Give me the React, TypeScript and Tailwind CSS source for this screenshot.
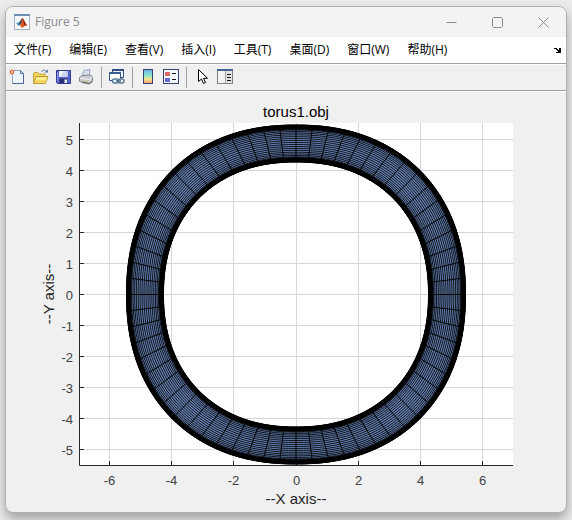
import type { ReactNode } from "react";

const MENU = [
  "文件(F)",
  "编辑(E)",
  "查看(V)",
  "插入(I)",
  "工具(T)",
  "桌面(D)",
  "窗口(W)",
  "帮助(H)",
];

/* ---------- icons ---------- */

function Icon({ children }: { children: ReactNode }) {
  return (
    <svg width="17" height="17" viewBox="0 0 17 17" aria-hidden="true">
      {children}
    </svg>
  );
}

function MatlabIcon() {
  return (
    <svg width="16" height="16" viewBox="0 0 16 16" aria-hidden="true">
      <rect x="0.5" y="0.5" width="15" height="15" fill="#f7f9fb" stroke="#a3afbb" />
      <rect x="0" y="0" width="16" height="2" fill="#6d8fb3" />
      <path d="M2 9.5 5 8l2 2-2 2z" fill="#4d8fb8" />
      <path d="M5 8c1.500-.3 2-3.500 3.500-4L8 9l-2.500 2z" fill="#3d4f70" />
      <path d="M8.300 4c1.300.3 3 5 5.200 8-1.500-1-2.500-.6-3.500.5-1 1.200-1.800 1.300-2.500 1L6 11c1.500-1 2-5 2.300-7z" fill="#d9541e" />
      <path d="M8.800 4.200c1 1 2.600 5 4.400 7.500-1.300-.8-2-.8-2.800 0z" fill="#8c2a17" />
    </svg>
  );
}

function NewIcon() {
  return (
    <Icon>
      <path d="M3.500 2.500h8l3 3v10h-11z" fill="#edf4ff" stroke="#8fa6cb" />
      <path d="M14.500 5.500v10h-11" fill="none" stroke="#4b6798" />
      <path d="M11.500 2.500v3h3z" fill="#c5d7f0" stroke="#6180b2" />
      <path d="M3 1v6M0 4h6M.5 1.500l5 5M5.500 1.500l-5 5" stroke="#eda583" />
      <circle cx="3" cy="4" r="1.500" fill="#fff0d8" stroke="#d9542a" />
    </Icon>
  );
}

function OpenIcon() {
  return (
    <Icon>
      <path d="M9.500 4c1-2.500 4-2.500 5 0" fill="none" stroke="#5874a0" />
      <path d="M12.500 4.500h3.500V1.500z" fill="#5874a0" />
      <path d="M1.500 14.500v-9l1-1h3l1.500 1.500h6v8.500z" fill="#f4d667" stroke="#c5a03a" />
      <path d="M1.500 15.500 4 8.500h12l-2.500 7z" fill="#ffee8e" stroke="#b99a35" />
      <path d="M2.500 14.500h10.500l.8-2H3.300z" fill="#efcb48" />
    </Icon>
  );
}

function SaveIcon() {
  return (
    <Icon>
      <path d="M1.500 2.500h14v13h-13l-1-1z" fill="#5765cb" stroke="#30388f" />
      <path d="M4 3h8.500v6H4z" fill="#f2f5ff" />
      <path d="M9 3h3.500v6H5z" fill="#c9d5f2" />
      <path d="M4.500 10.500h8V15h-8z" fill="#29306f" />
      <path d="M9.500 11.500H12V15H9.500z" fill="#f0f2fa" />
      <path d="M2.500 4v10" stroke="#8c98e8" />
    </Icon>
  );
}

function PrintIcon() {
  return (
    <Icon>
      <path d="M4 9 6 2.500l6-1L11 8z" fill="#f6faff" stroke="#8b9bb5" />
      <path d="M6.500 4.500l4-.7M6 6.500l4-.8" stroke="#b5c2d6" />
      <path d="M1.500 9.500 4 7.500 12.500 7l2 2v4l-3 2.500-10-2z" fill="#c9cbd0" stroke="#85888e" />
      <path d="M2 10l9.500 1.500L14.500 9" fill="none" stroke="#f8f8f8" />
      <path d="M4 13.500 11.500 15l3-2.500v1.500l-3.500 2.500-7-1.500z" fill="#6c6f75" />
      <path d="M5 13l5 1" stroke="#d3bf6b" />
    </Icon>
  );
}

function LinkIcon() {
  return (
    <Icon>
      <path d="M3.500 1.500h11v8h-11z" fill="#f0f4fa" stroke="#35537f" />
      <path d="M3 1h12v2H3z" fill="#2e4c7c" />
      <path d="M.5 4.500h11v8H.5z" fill="#fff" stroke="#35537f" />
      <path d="M0 4h12v2H0z" fill="#3b5d91" />
      <rect x="3.500" y="11" width="6" height="4" rx="2" fill="#edf2f6" stroke="#5d7c96" strokeWidth="1.500" />
      <rect x="9" y="11" width="6" height="4" rx="2" fill="#edf2f6" stroke="#5d7c96" strokeWidth="1.500" />
      <path d="M7 13h5" stroke="#46647e" strokeWidth="1.500" />
    </Icon>
  );
}

function ColorbarIcon() {
  return (
    <Icon>
      <defs>
        <linearGradient id="cbar" x1="0" y1="0" x2="0" y2="1">
          <stop offset="0" stopColor="#6db1e8" />
          <stop offset="0.4" stopColor="#85e2d4" />
          <stop offset="0.7" stopColor="#f6e58a" />
          <stop offset="1" stopColor="#f09a78" />
        </linearGradient>
      </defs>
      <rect x="3.500" y="1.500" width="9" height="14" fill="url(#cbar)" stroke="#34446f" />
    </Icon>
  );
}

function LegendIcon() {
  return (
    <Icon>
      <rect x="0.500" y="1.500" width="15" height="14" fill="#f7f9ff" stroke="#34446f" />
      <path d="M2 4h5v4H2z" fill="#dc6b65" />
      <path d="M2 10h5v4H2z" fill="#6266d8" />
      <path d="M9 5.500h4M9 11.500h4" stroke="#111" />
    </Icon>
  );
}

function PointerIcon() {
  return (
    <Icon>
      <path
        d="M4.500 1.500v12l3-2.500 2 4.500 2-1-2-4.200h4z"
        fill="#fff"
        stroke="#000"
      />
    </Icon>
  );
}

function PanelIcon() {
  return (
    <Icon>
      <rect x="0.500" y="1.500" width="15" height="14" fill="#e4e4e4" stroke="#7b8189" />
      <path d="M0 1h16v2H0z" fill="#426694" />
      <path d="M1 3h8v12H1z" fill="#f3f3f3" />
      <path d="M8.500 3v12" stroke="#a0a0a0" />
      <path d="M10 6.500h4M10 9.500h4M10 12.500h4" stroke="#111" />
    </Icon>
  );
}

function ToolButton({ label, children }: { label: string; children: ReactNode }) {
  return (
    <button
      aria-label={label}
      className="flex h-[25px] w-[23px] items-center justify-center pb-[2px] hover:bg-[#dce9f7]"
    >
      {children}
    </button>
  );
}

function Separator() {
  return <div className="ml-[3px] mr-1 h-[21px] w-px bg-[#a0a0a0]" />;
}

/* ---------- plot ---------- */

const CX = 290;
const CY = 202.5;
const OUTER = { r: 169.5, n: 2.22 };
const INNER = { r: 132.5, n: 2.2 };

// point of the ring at angle t, s = 0 on the inner rim and 1 on the outer rim
function ringPoint(t: number, s: number) {
  const radius = (r: number, n: number) => {
    const c = Math.abs(Math.cos(t));
    const d = Math.abs(Math.sin(t));
    return r / Math.pow(Math.pow(c, n) + Math.pow(d, n), 1 / n);
  };
  const a = radius(INNER.r, INNER.n);
  const b = radius(OUTER.r, OUTER.n);
  const r = a + (b - a) * s;
  return [CX + r * Math.cos(t), CY - r * Math.sin(t)];
}

function ringPath(s: number) {
  const pts: string[] = [];
  for (let i = 0; i < 128; i++) {
    const [x, y] = ringPoint((i / 128) * Math.PI * 2, s);
    pts.push(`${x.toFixed(2)} ${y.toFixed(2)}`);
  }
  return `M${pts.join("L")}Z`;
}

function Torus() {
  const tubes = 29;
  const loops = Array.from({ length: tubes + 1 }, (_, i) =>
    ringPath((1 - Math.cos((i / tubes) * Math.PI)) / 2)
  );
  const spokes = Array.from({ length: 64 }, (_, i) => {
    const t = (i / 64) * Math.PI * 2;
    const [x1, y1] = ringPoint(t + 0.02 * Math.sin(-4 * t), 0);
    const [x2, y2] = ringPoint(t, 1);
    return `M${x1.toFixed(2)} ${y1.toFixed(2)}L${x2.toFixed(2)} ${y2.toFixed(2)}`;
  });

  return (
    <g fill="none" stroke="#000">
      <path d={ringPath(1) + ringPath(0)} fill="#6480b2" fillRule="evenodd" stroke="none" />
      <g strokeOpacity="0.85">
        {loops.map((d, i) => (
          <path key={i} d={d} />
        ))}
      </g>
      <path d={spokes.join("")} />
      <path d={ringPath(0.94)} strokeWidth="5" />
      <path d={ringPath(0.06)} strokeWidth="5" />
    </g>
  );
}

function Plot() {
  const xs = [-6, -4, -2, 0, 2, 4, 6];
  const ys = [5, 4, 3, 2, 1, 0, -1, -2, -3, -4, -5];
  const px = (v: number) => Math.floor(CX + v * 31.080) + 0.5;
  const py = (v: number) => 202.5 - v * 31;

  return (
    <svg
      viewBox="0 0 560 420"
      className="block h-auto w-full font-['Liberation_Sans',Arial,sans-serif]"
      role="img"
      aria-label="torus1.obj"
    >
      <rect x="73" y="31" width="434" height="343" fill="#fff" />
      <g stroke="#d6d6d6">
        {xs.map((v) => (
          <path key={v} d={`M${px(v)} 31V373`} />
        ))}
        {ys.map((v) => (
          <path key={v} d={`M74 ${py(v)}H507`} />
        ))}
      </g>
      <g stroke="#262626" fill="none">
        <path d="M73.500 31V373.500H507" />
        {xs.map((v) => (
          <path key={v} d={`M${px(v)} 373V369`} />
        ))}
        {ys.map((v) => (
          <path key={v} d={`M74 ${py(v)}H78`} />
        ))}
      </g>
      <Torus />
      <g fill="#404040" fontSize="13">
        {xs.map((v) => (
          <text key={v} x={px(v)} y="393" textAnchor="middle">
            {v}
          </text>
        ))}
        {ys.map((v) => (
          <text key={v} x="67" y={py(v) + 5} textAnchor="end">
            {v}
          </text>
        ))}
      </g>
      <g fontSize="15" textAnchor="middle">
        <text x="290" y="25" fill="#000">
          torus1.obj
        </text>
        <text x="290" y="412" fill="#262626">
          --X axis--
        </text>
        <text transform="translate(48 202) rotate(-90)" fill="#262626">
          --Y axis--
        </text>
      </g>
    </svg>
  );
}

/* ---------- window ---------- */

export default function App() {
  return (
    <div className="min-h-screen overflow-hidden bg-[#ececec] px-[5px] pb-[7px] pt-1.5 font-['Open_Sans','Noto_Sans_CJK_SC',sans-serif] text-xs">
      <div className="overflow-hidden rounded-lg border border-[#b0b0b0] bg-[#f0f0f0] shadow-[0_6px_12px_rgba(0,0,0,0.32)]">
        <header className="flex h-[30px] items-center bg-[#f3f3f3] pl-2">
          <MatlabIcon />
          <h1 className="ml-[5px] flex-1 text-[#8c8c8c]">Figure 5</h1>
          {[
            ["最小化", "M.5 5.500h10"],
            ["最大化", "M1.500.5h8l1 1v8l-1 1h-8l-1-1v-8z"],
            ["关闭", "M.5.5l10 10M10.500.5l-10 10"],
          ].map(([label, d]) => (
            <button
              key={label}
              aria-label={label}
              className="flex h-full w-[46px] items-center justify-center hover:bg-[#e5e5e5]"
            >
              <svg width="11" height="11" viewBox="0 0 11 11" fill="none" stroke="#8c8c8c">
                <path d={d} />
              </svg>
            </button>
          ))}
        </header>

        <nav className="flex h-[26px] items-center gap-[18px] bg-white pl-2 pr-[5px] text-black">
          {MENU.map((item) => (
            <button key={item} className="whitespace-nowrap">
              {item}
            </button>
          ))}
          <button aria-label="停靠" className="ml-auto">
            <svg width="7" height="6" viewBox="0 0 7 6" aria-hidden="true">
              <path d="M0 1h3v1h1v1h1V1h2v5H2V5h2V4H3V3H2V2H0z" fill="#000" />
            </svg>
          </button>
        </nav>

        <div className="flex h-7 items-center border-b border-t border-[#a0a0a0] bg-[#f0f0f0] shadow-[inset_0_1px_0_#fff]">
          <ToolButton label="新建图窗">
            <NewIcon />
          </ToolButton>
          <ToolButton label="打开文件">
            <OpenIcon />
          </ToolButton>
          <ToolButton label="保存图窗">
            <SaveIcon />
          </ToolButton>
          <ToolButton label="打印图窗">
            <PrintIcon />
          </ToolButton>
          <Separator />
          <ToolButton label="链接绘图">
            <LinkIcon />
          </ToolButton>
          <Separator />
          <ToolButton label="插入颜色栏">
            <ColorbarIcon />
          </ToolButton>
          <ToolButton label="插入图例">
            <LegendIcon />
          </ToolButton>
          <Separator />
          <ToolButton label="编辑绘图">
            <PointerIcon />
          </ToolButton>
          <ToolButton label="打开属性检查器">
            <PanelIcon />
          </ToolButton>
        </div>

        <main className="border-t border-white">
          <Plot />
        </main>
      </div>
    </div>
  );
}
